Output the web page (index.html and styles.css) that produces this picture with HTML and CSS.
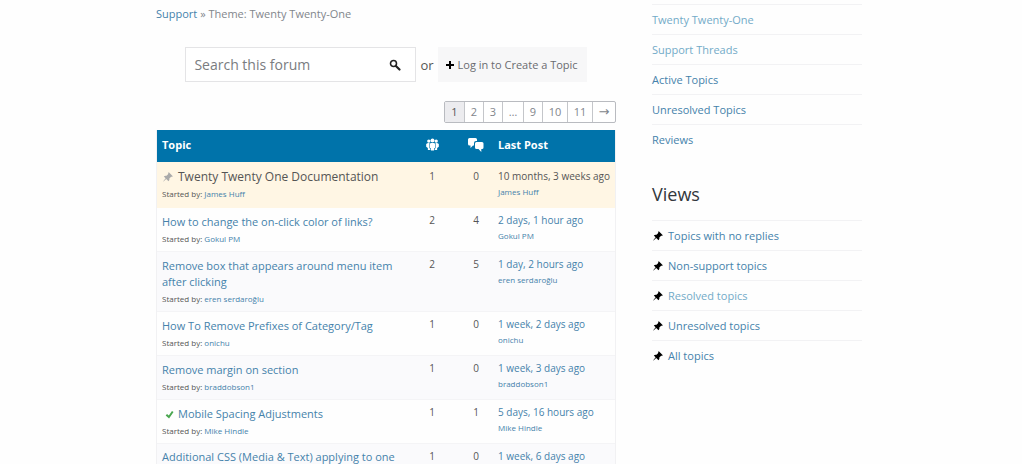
FILE: index.html
```
<!DOCTYPE html>
<html lang="en">
<head>
<meta charset="utf-8">
<meta name="viewport" content="width=device-width, initial-scale=1">
<title>Theme: Twenty Twenty-One Support</title>
<link rel="stylesheet" href="styles.css">
</head>
<body>
<svg class="sprite" aria-hidden="true">
  <symbol id="pin" viewBox="0 0 20 20"><path d="M10.4 3l1-.9 6.600 6.600-1 1c-1-.3-2 0-2.600.6l-2.200 2.200c.4 1.700 0 3.300-1.300 4.500L7 13.200 2.500 17.500 2 18l.5-1.500L6 12.200 3 9.200c1.200-1.300 2.800-1.700 4.500-1.300l2.200-2.200c.7-.7 1-1.700.7-2.700z"/></symbol>
</svg>
<div class="page">
  <main class="forum">
    <nav class="breadcrumb"><a href="#">Support</a> » Theme: Twenty Twenty-One</nav>
    <div class="actions">
      <form class="search">
        <input class="search-input" type="search" placeholder="Search this forum" aria-label="Search this forum">
        <button class="search-button" type="button" aria-label="Search">
          <svg class="search-icon" viewBox="0 0 20 20"><circle cx="7.500" cy="7.500" r="5" fill="none" stroke="currentColor" stroke-width="2.600"/><path d="M11.500 11.500L17.500 17.500" stroke="currentColor" stroke-width="3.600" stroke-linecap="round"/></svg>
        </button>
      </form>
      <span class="or">or</span>
      <a class="login" href="#"><svg class="plus" viewBox="0 0 8 8"><path d="M3 0h2v3h3v2H5v3H3V5H0V3h3z"/></svg>Log in to Create a Topic</a>
    </div>
    <nav class="pages" aria-label="Pages">
      <span class="page-item current">1</span>
      <a class="page-item" href="#">2</a>
      <a class="page-item" href="#">3</a>
      <span class="page-item dots">…</span>
      <a class="page-item" href="#">9</a>
      <a class="page-item wide" href="#">10</a>
      <a class="page-item wide" href="#">11</a>
      <a class="page-item next" href="#">→</a>
    </nav>
    <table class="topics">
      <thead>
        <tr>
          <th class="topic">Topic</th>
          <th class="count"><svg class="head-icon" viewBox="0 0 14 14" role="img" aria-label="Participants"><circle cx="7" cy="2.600" r="2.100"/><circle cx="3" cy="3.300" r="1.800"/><circle cx="11" cy="3.300" r="1.800"/><path d="M4.300 5.800Q7 4.200 9.700 5.800V10.500l-1 .8V13.500H5.300V11.300l-1-.8zM.2 6.500Q1.500 5.200 3.700 5.500V10.800l.9 1v1H2V10.800L.2 9.500zM13.800 6.500Q12.500 5.200 10.300 5.500V10.800l-.9 1v1H12V10.800L13.800 9.500z"/></svg></th>
          <th class="count"><svg class="head-icon voices" viewBox="0 0 16 14" role="img" aria-label="Replies"><path d="M1.500 0h6Q9 0 9 1.500V3H8Q6 3 6 5v2.500H5L2.500 10V7.500h-1Q0 7.500 0 6V1.500Q0 0 1.500 0zM8.500 4H14q1.500 0 1.500 1.500v4Q15.500 11 14 11h-.7v3L10.500 11h-2Q7 11 7 9.500v-4Q7 4 8.500 4z"/></svg></th>
          <th class="last">Last Post</th>
        </tr>
      </thead>
      <tbody>
        <tr class="sticky">
          <td class="topic"><a class="title" href="#"><svg class="state pinned"><use href="#pin"/></svg>Twenty Twenty One Documentation</a><p class="meta">Started by: <a href="#">James Huff</a></p></td>
          <td class="count">1</td><td class="count">0</td>
          <td class="last"><a class="fresh" href="#">10 months, 3 weeks ago</a><p class="meta"><a href="#">James Huff</a></p></td>
        </tr>
        <tr>
          <td class="topic"><a class="title" href="#">How to change the on-click color of links?</a><p class="meta">Started by: <a href="#">Gokul PM</a></p></td>
          <td class="count">2</td><td class="count">4</td>
          <td class="last"><a class="fresh" href="#">2 days, 1 hour ago</a><p class="meta"><a href="#">Gokul PM</a></p></td>
        </tr>
        <tr class="shaded">
          <td class="topic"><a class="title" href="#">Remove box that appears around menu item after clicking</a><p class="meta">Started by: <a href="#">eren serdaroğlu</a></p></td>
          <td class="count">2</td><td class="count">5</td>
          <td class="last"><a class="fresh" href="#">1 day, 2 hours ago</a><p class="meta"><a href="#">eren serdaroğlu</a></p></td>
        </tr>
        <tr>
          <td class="topic"><a class="title" href="#">How To Remove Prefixes of Category/Tag</a><p class="meta">Started by: <a href="#">onichu</a></p></td>
          <td class="count">1</td><td class="count">0</td>
          <td class="last"><a class="fresh" href="#">1 week, 2 days ago</a><p class="meta"><a href="#">onichu</a></p></td>
        </tr>
        <tr class="shaded">
          <td class="topic"><a class="title" href="#">Remove margin on section</a><p class="meta">Started by: <a href="#">braddobson1</a></p></td>
          <td class="count">1</td><td class="count">0</td>
          <td class="last"><a class="fresh" href="#">1 week, 3 days ago</a><p class="meta"><a href="#">braddobson1</a></p></td>
        </tr>
        <tr>
          <td class="topic"><a class="title" href="#"><svg class="state resolved" viewBox="0 0 20 20"><path d="M15.500 2L19 4.500 9 19 1.500 12l3-3L8.500 12z"/></svg>Mobile Spacing Adjustments</a><p class="meta">Started by: <a href="#">Mike Hindle</a></p></td>
          <td class="count">1</td><td class="count">1</td>
          <td class="last"><a class="fresh" href="#">5 days, 16 hours ago</a><p class="meta"><a href="#">Mike Hindle</a></p></td>
        </tr>
        <tr class="shaded">
          <td class="topic"><a class="title" href="#">Additional CSS (Media &amp; Text) applying to one</a></td>
          <td class="count">1</td><td class="count">0</td>
          <td class="last"><a class="fresh" href="#">1 week, 6 days ago</a></td>
        </tr>
      </tbody>
    </table>
  </main>
  <aside class="sidebar">
    <ul class="links">
      <li><a class="light" href="#">Twenty Twenty-One</a></li>
      <li><a class="light" href="#">Support Threads</a></li>
      <li><a href="#">Active Topics</a></li>
      <li><a href="#">Unresolved Topics</a></li>
      <li><a href="#">Reviews</a></li>
    </ul>
    <h2 class="heading">Views</h2>
    <ul class="links">
      <li><svg class="pin"><use href="#pin"/></svg><a href="#">Topics with no replies</a></li>
      <li><svg class="pin"><use href="#pin"/></svg><a href="#">Non-support topics</a></li>
      <li><svg class="pin"><use href="#pin"/></svg><a class="light" href="#">Resolved topics</a></li>
      <li><svg class="pin"><use href="#pin"/></svg><a href="#">Unresolved topics</a></li>
      <li><svg class="pin"><use href="#pin"/></svg><a href="#">All topics</a></li>
    </ul>
  </aside>
</div>
</body>
</html>
```
FILE: styles.css
```
* { box-sizing: border-box; }
body {
  margin: 0;
  height: 100vh;
  overflow: hidden;
  background: #fefefe;
  color: #555;
  font: 11px/16px "Open Sans", sans-serif;
}
a { color: #4582ab; text-decoration: none; }
p, ul, h2 { margin: 0; padding: 0; }
.sprite { display: none; }
.page {
  display: grid;
  grid-template-columns: minmax(0, 460fr) minmax(0, 210fr);
  column-gap: 36px;
  max-width: 710px;
  margin: 0 auto;
  padding-right: 4px;
}
.breadcrumb { padding-top: 6px; color: #82868c; }
.actions {
  display: flex;
  align-items: center;
  justify-content: center;
  gap: 4px;
  padding: 25px 0 19px;
}
.search {
  display: flex;
  flex: 0 1 231px;
  min-width: 0;
  height: 35px;
  border: 1px solid #e4e4e6;
  background: #fff;
}
.search-input {
  flex: 1;
  min-width: 0;
  padding: 0 8px;
  border: 0;
  background: none;
  font: 14px/20px "Open Sans", sans-serif;
}
.search-input::placeholder { color: #7a7c80; }
.search-button { width: 40px; padding: 0; border: 0; background: none; color: #222; }
.search-icon { display: block; width: 12px; height: 12px; margin: 0 auto; }
.or { font-size: 13px; }
.login {
  display: flex;
  align-items: center;
  gap: 4px;
  height: 35px;
  padding: 0 9px 0 8px;
  background: #f7f7f8;
  color: #6a6c70;
}
.plus { width: 8px; height: 8px; fill: #000; }
.pages {
  display: flex;
  width: fit-content;
  margin: 0 0 7px auto;
  border: 1px solid #b9bbc0;
  border-radius: 2px;
  background: #fff;
}
.page-item {
  min-width: 19px;
  padding: 1px 5px;
  border-left: 1px solid #c4c6ca;
  color: #82868c;
  line-height: 18px;
  text-align: center;
}
.page-item.current { border-left: 0; background: #ececef; color: #555; }
.page-item.dots { min-width: 21px; }
.page-item.wide { min-width: 25px; }
.page-item.next { min-width: 23px; padding: 1px 4px; font-family: "DejaVu Sans", sans-serif; font-size: 13px; }
.topics {
  width: 100%;
  table-layout: fixed;
  border-collapse: separate;
  border-spacing: 0;
  border-left: 1px solid #f1f1f3;
  border-right: 1px solid #f1f1f3;
}
th {
  height: 32px;
  padding: 0 5px 3px;
  background: #0073aa;
  color: #fff;
  text-align: left;
  line-height: 16px;
}
td { padding: 4px 5px; border-bottom: 1px solid #f4f4f6; vertical-align: top; }
td:first-child { padding-top: 6px; padding-bottom: 4px; }
th.topic { width: 253px; }
th.count { width: 44px; }
.count { padding-right: 0; padding-left: 0; text-align: center; }
td.count, .fresh { font-size: 10px; }
td.last, th.last { padding-right: 0; padding-left: 0; white-space: nowrap; }
.head-icon { display: block; width: 13px; height: 13px; margin: 0 auto; fill: #fff; }
.head-icon.voices { width: 16px; height: 14px; }
.title, .fresh { display: block; }
.meta { font-size: 8px; line-height: 16px; }
.topic .meta { line-height: 17px; }
.shaded td { background: #fafafc; }
.sticky td { border: 0; background: #fff6e4; }
.sticky td:first-child { padding-top: 7px; padding-bottom: 6px; }
.sticky .title, .sticky .fresh { color: #555; }
.sticky .title { font-size: 12px; }
.sticky .count, .sticky .last { padding-top: 6px; }
tr:last-child td, tr:last-child td:first-child { padding-bottom: 0; border: 0; }
tbody tr:last-child td:first-child { padding-top: 5px; }
.state { width: 12px; height: 12px; margin-right: 4px; vertical-align: -2px; }
.pinned { fill: #aaa; }
.resolved { width: 9px; height: 9px; margin: 0 4px 0 3px; vertical-align: -1px; fill: #4aa64f; }
.sidebar { padding-top: 4px; }
.links { list-style: none; }
.links li { display: flex; align-items: center; gap: 4px; height: 30px; border-top: 1px solid #f2f2f4; }
.links .light { color: #73abc8; }
.pin { width: 12px; height: 12px; fill: #000; }
.heading { padding: 28px 0 14px; color: #32373c; font-size: 18px; font-weight: 500; line-height: 24px; }
```
